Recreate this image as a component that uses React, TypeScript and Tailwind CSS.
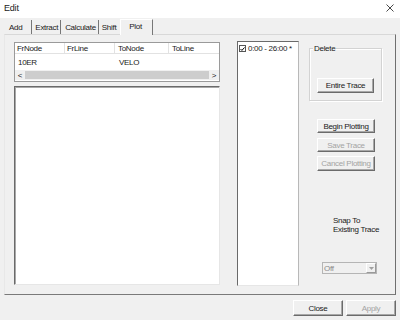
import React from "react";

const btn =
  "flex items-center justify-center whitespace-nowrap bg-[#f0f0f0] border border-t-white border-l-white border-r-[#6b6b6b] border-b-[#6b6b6b] shadow-[inset_-1px_-1px_0_#a8a8a8]";

export default function App() {
  return (
    <div className="w-[400px] h-[320px] bg-[#f0f0f0] font-['Liberation_Sans',Arial,sans-serif] text-[8px] leading-[9px] tracking-[-0.3px] text-[#1a1a1a] overflow-hidden">
      {/* Title bar */}
      <div className="h-[18px] bg-white flex items-center justify-between pl-[4px] pr-[6px]">
        <span className="text-[9px] tracking-[-0.2px] mt-[-2px]">Edit</span>
        <svg width="8" height="8" viewBox="0 0 8 8" className="mt-[-2px]">
          <path d="M0.5 0.5 L7.5 7.5 M7.5 0.5 L0.5 7.5" stroke="#333" strokeWidth="0.9" />
        </svg>
      </div>

      {/* Tabs */}
      <div className="h-[16px] flex items-end pl-[4px] whitespace-nowrap">
        <div className="h-[14px] flex items-center pl-[5px] pr-[9px] border-r border-r-[#777]">Add</div>
        <div className="h-[14px] flex items-center pl-[3px] pr-[2px] border-r border-r-[#777]">Extract</div>
        <div className="h-[14px] flex items-center pl-[4px] pr-[2px] border-r border-r-[#777]">Calculate</div>
        <div className="h-[14px] flex items-center pl-[3px] pr-[4px]">Shift</div>
        <div className="h-[16px] w-[33px] flex items-center pl-[8px] pb-[3px] bg-[#f0f0f0] border-t border-l border-t-white border-l-white border-r border-r-[#777] relative top-[1px]">
          Plot
        </div>
      </div>

      {/* Tab panel */}
      <div className="ml-[4px] w-[392px] h-[261px] border border-t-[#d8d8d8] border-l-[#e8e8e8] border-r-[#6f6f6f] border-b-[#7a7a7a] flex items-start pl-[9px]">
        {/* Left column */}
        <div className="w-[206px] mt-[7px] flex flex-col">
          {/* ListView */}
          <div className="h-[40px] bg-white border border-[#9a9a9a] flex flex-col">
            <div className="h-[11px] flex border-b border-b-[#e2e2e2]">
              <div className="w-[50px] pl-[2px] border-r border-r-[#e2e2e2] flex items-center">FrNode</div>
              <div className="w-[50px] pl-[2px] border-r border-r-[#e2e2e2] flex items-center">FrLine</div>
              <div className="w-[54px] pl-[3px] border-r border-r-[#e2e2e2] flex items-center">ToNode</div>
              <div className="flex-1 pl-[3px] flex items-center">ToLine</div>
            </div>
            <div className="h-[16px] flex items-center">
              <div className="w-[100px] pl-[3px]">10ER</div>
              <div className="pl-[4px]">VELO</div>
            </div>
            <div className="h-[10px] flex items-center bg-[#f0f0f0]">
              <div className="w-[10px] flex items-center justify-center text-[8px]">&lt;</div>
              <div className="flex-1 h-[8px] bg-[#cdcdcd]" />
              <div className="w-[10px] flex items-center justify-center text-[8px]">&gt;</div>
            </div>
          </div>
          {/* White box */}
          <div className="mt-[4px] h-[199px] bg-white border border-t-[#6a6a6a] border-l-[#6a6a6a] border-r-[#e6e6e6] border-b-[#e6e6e6] shadow-[inset_1px_1px_0_#a8a8a8]" />
        </div>

        {/* Check list */}
        <div className="ml-[17px] mt-[6px] w-[62px] h-[245px] bg-white border border-t-[#6a6a6a] border-l-[#6a6a6a] border-r-[#b8b8b8] border-b-[#e6e6e6] pt-[2px] pl-[1px]">
          <div className="flex items-center gap-[2px] whitespace-nowrap">
            <div className="w-[7px] h-[7px] border border-[#555] flex items-center justify-center">
              <svg width="6" height="6" viewBox="0 0 6 6">
                <path d="M0.6 3 L2.3 4.7 L5.4 1.2" stroke="#000" strokeWidth="1.2" fill="none" />
              </svg>
            </div>
            <span>0:00 - 26:00 *</span>
          </div>
        </div>

        {/* Right column */}
        <div className="ml-[10px] w-[73px] flex flex-col">
          {/* Delete group */}
          <div className="mt-[13px] h-[53px] border border-[#d3d3d3] shadow-[inset_1px_1px_0_#fff,1px_1px_0_#fff] relative">
            <span className="absolute -top-[5px] left-[3px] px-[1px] bg-[#f0f0f0]">Delete</span>
            <div className={btn + " ml-[7px] mt-[29px] w-[57px] h-[15px]"}>Entire Trace</div>
          </div>
          <div className={btn + " ml-[8px] mt-[18px] w-[58px] h-[14px]"}>Begin Plotting</div>
          <div className={btn + " ml-[8px] mt-[5px] w-[58px] h-[14px] text-[#a3a3a3]"}>Save Trace</div>
          <div className={btn + " ml-[8px] mt-[4px] w-[58px] h-[15px] text-[#a3a3a3]"}>Cancel Plotting</div>
          <div className="ml-[24px] mt-[45px] leading-[9px] whitespace-nowrap">
            Snap To
            <br />
            Existing Trace
          </div>
          <div className="ml-[13px] mt-[28px] w-[55px] h-[12px] bg-[#f0f0f0] border border-[#b5b5b5] flex items-center">
            <span className="pl-[1px] flex-1 text-[#8a8a8a]">Off</span>
            <div className="w-[10px] h-[10px] border border-t-white border-l-white border-r-[#9a9a9a] border-b-[#9a9a9a] flex items-center justify-center">
              <svg width="5" height="3" viewBox="0 0 5 3">
                <path d="M0 0 L5 0 L2.5 3 Z" fill="#a0a0a0" />
              </svg>
            </div>
          </div>
        </div>
      </div>

      {/* Bottom buttons */}
      <div className="flex justify-end pr-[4px] mt-[5px] gap-[3px]">
        <div className={btn + " w-[50px] h-[16px]"}>Close</div>
        <div className={btn + " w-[50px] h-[16px] text-[#a3a3a3]"}>Apply</div>
      </div>
    </div>
  );
}
